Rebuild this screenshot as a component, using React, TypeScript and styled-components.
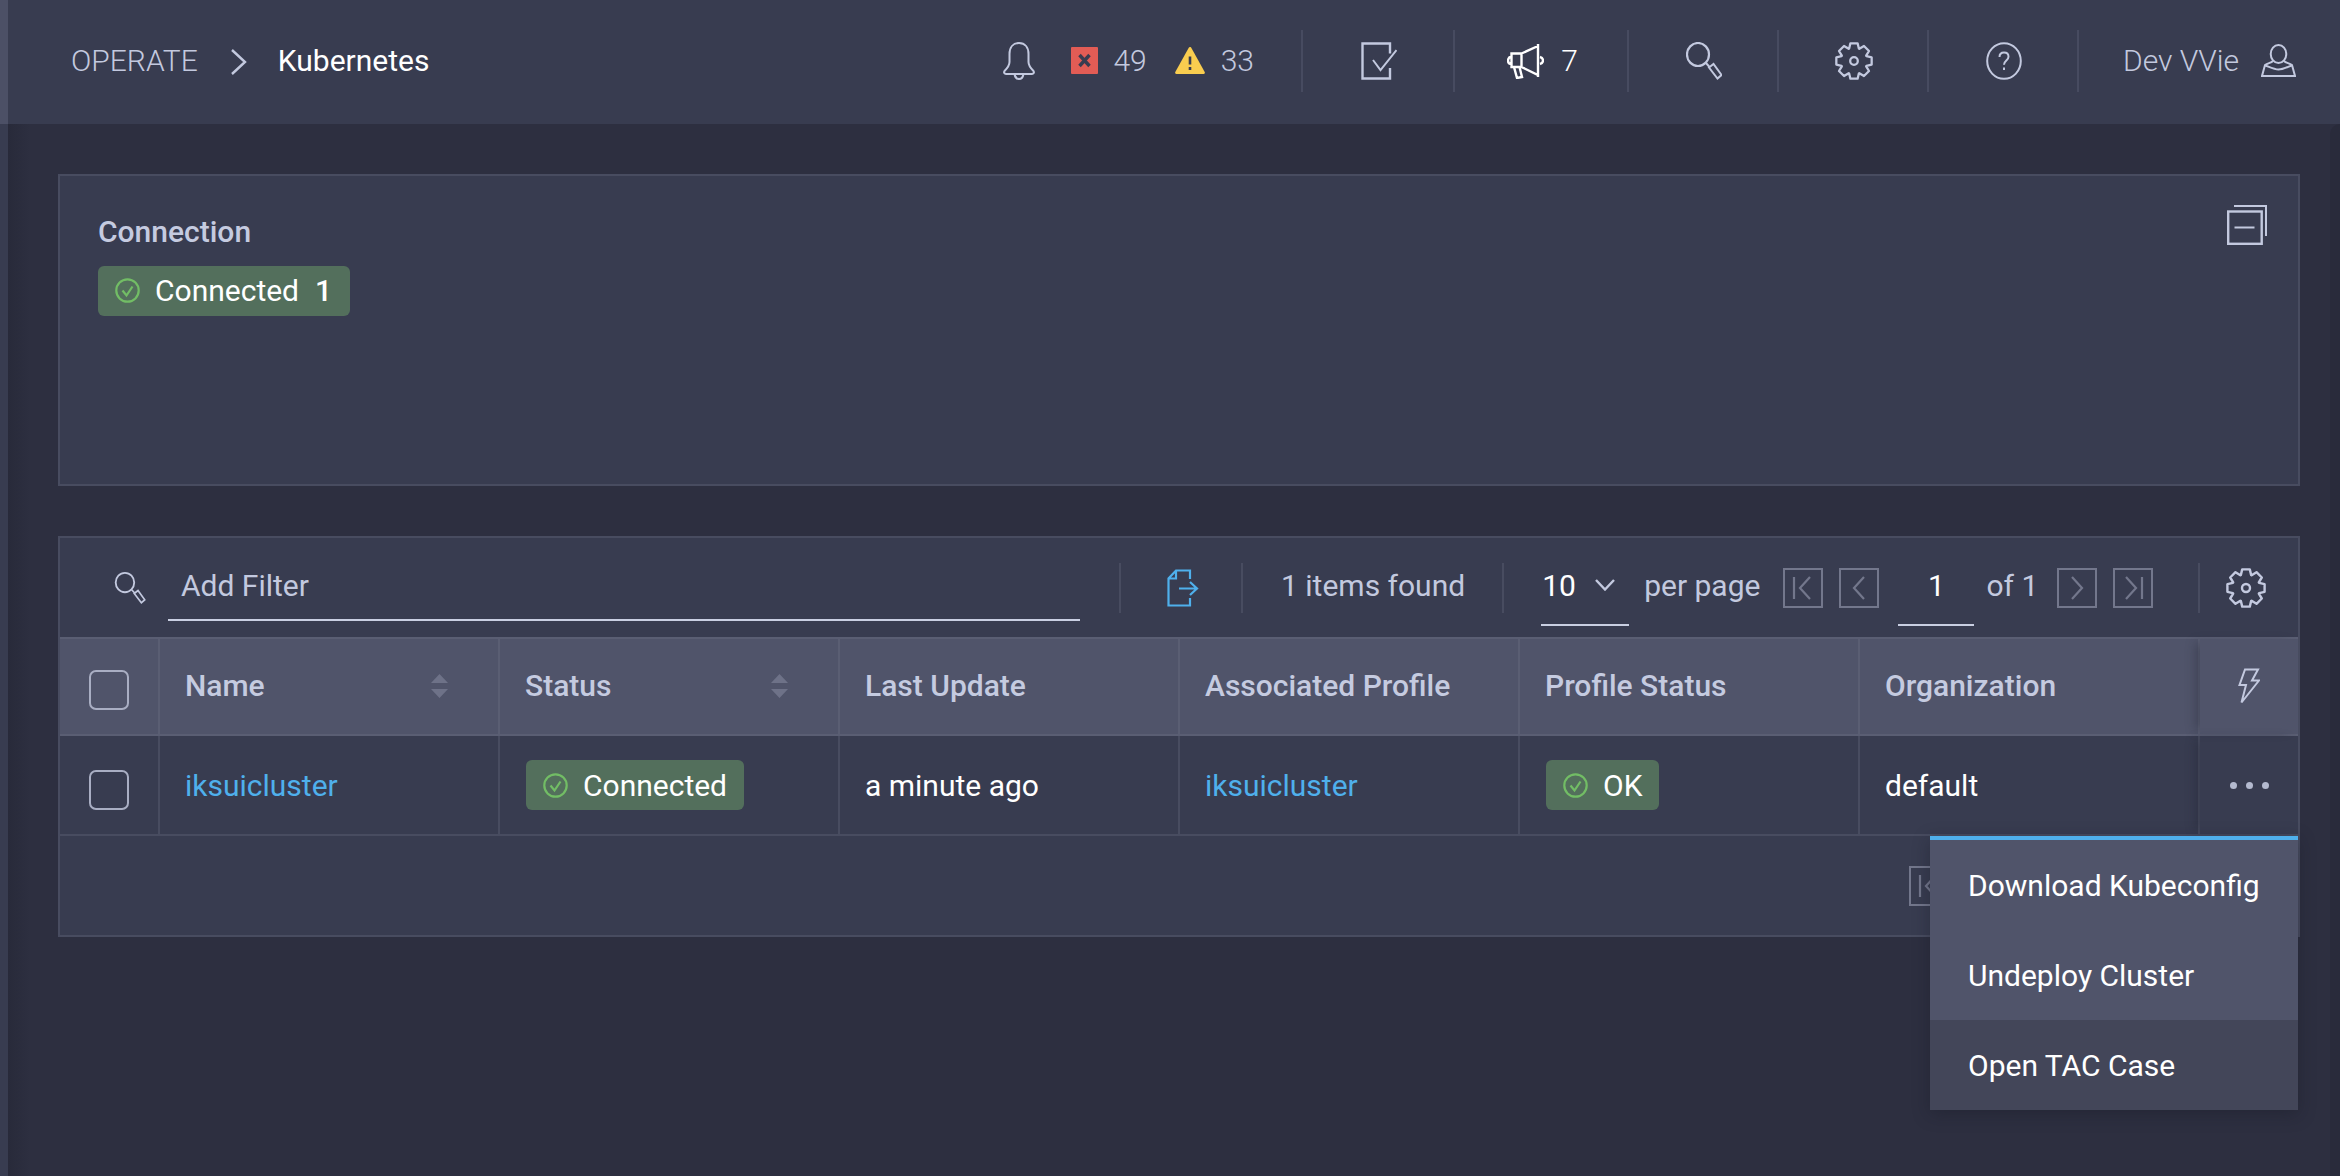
import React from "react";
import styled, { createGlobalStyle } from "styled-components";

const GlobalStyle = createGlobalStyle`
  html, body {
    margin: 0;
    padding: 0;
    background: #2d2f40;
    font-family: Roboto, "Liberation Sans", sans-serif;
    font-size: 30px;
    color: #fff;
  }
  * {
    box-sizing: border-box;
  }
`;

const Page = styled.div`
  width: 2340px;
  height: 1176px;
  overflow: hidden;
  display: flex;
  flex-direction: column;
`;

const TopBar = styled.header`
  position: relative;
  height: 124px;
  flex: none;
  display: flex;
  align-items: center;
  justify-content: space-between;
  background: #383c50;
  padding: 0 0 3px 71px;

  &::before {
    content: "";
    position: absolute;
    left: 0;
    top: 0;
    bottom: 0;
    width: 8px;
    background: #4c5066;
  }
`;

const Breadcrumb = styled.nav`
  display: flex;
  align-items: center;
`;

const Crumb = styled.span<{ $current?: boolean }>`
  color: ${(p) => (p.$current ? "#fff" : "#c3c9df")};
  font-weight: ${(p) => (p.$current ? 400 : 300)};
  line-height: 36px;
`;

const CrumbArrow = styled.svg`
  width: 18px;
  height: 28px;
  margin: 2px 30px 0 32px;
`;

const TopRight = styled.div`
  display: flex;
  align-items: center;
`;

const AlertGroup = styled.div`
  display: flex;
  align-items: center;
  padding-right: 47px;
`;

const Count = styled.span<{ $white?: boolean; $gap: number }>`
  color: ${(p) => (p.$white ? "#fff" : "#c3c9df")};
  font-weight: 300;
  margin-left: ${(p) => p.$gap}px;
  line-height: 36px;
`;

const TopSection = styled.div<{ $width: number }>`
  width: ${(p) => p.$width}px;
  height: 62px;
  padding-left: 3px;
  border-left: 2px solid #474b60;
  display: flex;
  align-items: center;
  justify-content: center;
`;

const UserSection = styled.div`
  height: 62px;
  border-left: 2px solid #474b60;
  display: flex;
  align-items: center;
  padding: 0 44px 0 44px;
`;

const UserName = styled.span`
  color: #c3c9df;
  font-weight: 300;
  margin-right: 22px;
`;

const Main = styled.main`
  position: relative;
  flex: 1;
  display: flex;
  flex-direction: column;
  gap: 50px;
  padding: 50px 40px 0 58px;
  background: #2d2f40;

  &::before {
    content: "";
    position: absolute;
    left: 0;
    top: 0;
    bottom: 0;
    width: 30px;
    background: linear-gradient(90deg, #383c50 0 8px, #282a3a 8px, #2d2f40 30px);
  }

  &::after {
    content: "";
    position: absolute;
    right: 0;
    top: 0;
    bottom: 0;
    width: 10px;
    background: #292b3b;
    border-top-left-radius: 10px;
  }
`;

const SummaryPanel = styled.section`
  position: relative;
  height: 312px;
  display: flex;
  justify-content: space-between;
  align-items: flex-start;
  padding: 29px 31px 0 38px;
  background: #383c50;
  border: 2px solid #484c60;
`;

const SummaryBody = styled.div`
  margin-top: 9px;
`;

const SummaryTitle = styled.div`
  color: #c5cbe0;
  font-weight: 500;
  line-height: 36px;
  margin-bottom: 16px;
`;

const Badge = styled.span<{ $width: number; $lift?: number; $left?: number }>`
  display: flex;
  align-items: center;
  width: ${(p) => p.$width}px;
  height: 50px;
  margin-left: ${(p) => p.$left ?? 0}px;
  padding: 0 0 ${(p) => p.$lift ?? 0}px 17px;
  background: #536f5c;
  border-radius: 6px;
  color: #fff;
`;

const BadgeCount = styled.span`
  font-weight: 500;
  margin-left: 16px;
`;

const GridPanel = styled.section`
  position: relative;
  background: #383c50;
  border: 2px solid #484c60;
`;

const Toolbar = styled.div`
  height: 99px;
  display: flex;
  align-items: center;
`;

const ToolIcon = styled.svg<{ $left: number; $size?: number }>`
  flex: none;
  margin-left: ${(p) => p.$left}px;
  width: ${(p) => p.$size ?? 32}px;
  height: ${(p) => p.$size ?? 32}px;
  overflow: visible;
`;

const FilterBox = styled.div`
  width: 912px;
  height: 66px;
  margin-left: 22px;
  padding: 0 13px 2px;
  display: flex;
  align-items: center;
  border-bottom: 2px solid #c9cfe2;
  color: #c3c9df;
`;

const ToolDivider = styled.div<{ $left: number }>`
  flex: none;
  width: 2px;
  height: 50px;
  margin-left: ${(p) => p.$left}px;
  background: #484c60;
`;

const ToolText = styled.span<{ $left: number }>`
  flex: none;
  margin-left: ${(p) => p.$left}px;
  padding-bottom: 4px;
  color: #c3c9df;
`;

const UnderlinedBox = styled.div<{ $left: number; $width: number; $center?: boolean }>`
  flex: none;
  width: ${(p) => p.$width}px;
  height: 77px;
  margin-left: ${(p) => p.$left}px;
  display: flex;
  align-items: center;
  justify-content: ${(p) => (p.$center ? "center" : "flex-start")};
  padding: 0 0 3px ${(p) => (p.$center ? 0 : 1)}px;
  gap: 19px;
  border-bottom: 2px solid #c9cfe2;
  color: #fff;
`;

const Pager = styled.div<{ $left?: number }>`
  display: flex;
  align-items: center;
  margin-left: ${(p) => p.$left ?? 0}px;
`;

const PagerButton = styled.button<{ $left?: number }>`
  flex: none;
  width: 40px;
  height: 40px;
  padding: 0;
  margin-left: ${(p) => p.$left ?? 0}px;
  background: transparent;
  border: 2px solid #73778c;
  display: flex;
  align-items: center;
  justify-content: center;
`;

const HeaderRow = styled.div`
  display: grid;
  grid-template-columns: 100px repeat(6, 340px) 98px;
  height: 99px;
  background: #50546a;
  border-top: 2px solid #5a5e73;
  border-bottom: 2px solid #5a5e73;
`;

const BodyRow = styled.div`
  display: grid;
  grid-template-columns: 100px repeat(6, 340px) 98px;
  height: 100px;
  border-bottom: 2px solid #484c60;
`;

const HeaderCell = styled.div`
  display: flex;
  align-items: center;
  justify-content: space-between;
  padding: 0 50px 2px 25px;
  border-right: 2px solid #5a5e73;
  color: #c5cbe0;
  font-weight: 500;
`;

const BodyCell = styled.div`
  display: flex;
  align-items: center;
  padding: 0 25px;
  border-right: 2px solid #484c60;
  color: #fff;
`;

const CheckCell = styled.div<{ $head?: boolean }>`
  display: flex;
  align-items: center;
  justify-content: center;
  border-right: 2px solid ${(p) => (p.$head ? "#5a5e73" : "#484c60")};
`;

const Checkbox = styled.span<{ $drop: number }>`
  width: 40px;
  height: 40px;
  margin-top: ${(p) => p.$drop}px;
  border: 2px solid #a9aec3;
  border-radius: 7px;
`;

const ActionCell = styled.div<{ $head?: boolean }>`
  position: relative;
  display: flex;
  align-items: center;
  justify-content: center;
  box-shadow: -8px 0 10px -4px rgba(30, 32, 46, 0.35);
  ${(p) => (p.$head ? "padding-bottom: 2px;" : "")}
`;

const Dots = styled.div`
  display: flex;
  gap: 9px;
`;

const Dot = styled.span`
  width: 7px;
  height: 7px;
  border-radius: 50%;
  background: #b4bacf;
`;

const LinkText = styled.a`
  color: #4fb0ec;
`;

const GridFooter = styled.div`
  height: 99px;
  display: flex;
  align-items: center;
  justify-content: flex-end;
  padding-right: 19px;
`;

const PagerPageGap = styled.div`
  width: 178px;
`;

const Menu = styled.div`
  position: absolute;
  top: 298px;
  right: 0;
  width: 368px;
  border-top: 4px solid #4fb0ec;
  box-shadow: 0 4px 16px rgba(20, 22, 34, 0.35);
  z-index: 2;
`;

const MenuItem = styled.div<{ $active?: boolean }>`
  height: 90px;
  padding-left: 38px;
  display: flex;
  align-items: center;
  background: ${(p) => (p.$active ? "#50546a" : "#434659")};
  color: #fff;
`;

const columnTitles = [
  { title: "Name", sort: true },
  { title: "Status", sort: true },
  { title: "Last Update" },
  { title: "Associated Profile" },
  { title: "Profile Status" },
  { title: "Organization" },
];

const LINE = "#c3c9df";

// outline of the eight tooth cog used in the top bar and the toolbar
const gearPath = (() => {
  const pts: string[] = [];
  const cx = 20;
  const cy = 20;
  for (let i = 0; i < 8; i++) {
    const a = (i * Math.PI) / 4 - Math.PI / 2;
    const corners: [number, number][] = [
      [a - 0.37, 14],
      [a - 0.2, 19],
      [a + 0.2, 19],
      [a + 0.37, 14],
    ];
    corners.forEach(([ang, r]) => {
      pts.push(`${(cx + r * Math.cos(ang)).toFixed(1)} ${(cy + r * Math.sin(ang)).toFixed(1)}`);
    });
  }
  return `M${pts.join("L")}Z`;
})();

const GearIcon = () => (
  <>
    <path d={gearPath} fill="none" stroke={LINE} strokeWidth="2.400" strokeLinejoin="round" />
    <circle cx="20" cy="20" r="4" fill="none" stroke={LINE} strokeWidth="2.400" />
  </>
);

const SearchShape = () => (
  <>
    <ellipse cx="12" cy="12.500" rx="11" ry="11.500" fill="none" stroke={LINE} strokeWidth="2.200" />
    <path d="M23 25.500L27.500 22l8 11-4 3.500zM20 21l3.500 4" fill="none" stroke={LINE} strokeWidth="2" />
  </>
);

const CheckCircle = () => (
  <svg width="25" height="25" viewBox="0 0 25 25" style={{ flex: "none", marginRight: 15 }}>
    <circle cx="12.500" cy="12.500" r="11.200" fill="none" stroke="#72bd65" strokeWidth="2.200" />
    <path d="M7.500 12.500l4 5 6-9" fill="none" stroke="#72bd65" strokeWidth="2.200" />
  </svg>
);

const SortArrows = () => (
  <svg width="17" height="24" viewBox="0 0 17 24">
    <path d="M8.500 0L17 9H0zM0 15h17l-8.500 9z" fill="#6e7288" />
  </svg>
);

const PagerIcon = ({ d }: { d: string }) => (
  <svg width="28" height="28" viewBox="0 0 28 28">
    <path d={d} fill="none" stroke="#73778c" strokeWidth="2.200" />
  </svg>
);

const PagerFirst = ({ left }: { left?: number }) => (
  <PagerButton $left={left}>
    <PagerIcon d="M5 3v22M21 3L11 14l10 11" />
  </PagerButton>
);
const PagerPrev = ({ left }: { left?: number }) => (
  <PagerButton $left={left}>
    <PagerIcon d="M19 3L9 14l10 11" />
  </PagerButton>
);
const PagerNext = ({ left }: { left?: number }) => (
  <PagerButton $left={left}>
    <PagerIcon d="M9 3l10 11L9 25" />
  </PagerButton>
);
const PagerLast = ({ left }: { left?: number }) => (
  <PagerButton $left={left}>
    <PagerIcon d="M23 3v22M7 3l10 11L7 25" />
  </PagerButton>
);

const App = () => {
  return (
    <Page>
      <GlobalStyle />
      <TopBar>
        <Breadcrumb>
          <Crumb>OPERATE</Crumb>
          <CrumbArrow viewBox="0 0 18 28">
            <path d="M2 2l13 12L2 26" fill="none" stroke="#c3c9df" strokeWidth="2.400" />
          </CrumbArrow>
          <Crumb $current>Kubernetes</Crumb>
        </Breadcrumb>
        <TopRight>
          <AlertGroup>
            <svg width="32" height="38" viewBox="0 0 32 38">
              <path
                d="M16 1c-6 0-9.500 4.500-9.500 11v8c0 4-2 6-5 9-1 1.500 0 3 1.500 3h26c1.500 0 2.500-1.500 1.500-3-3-3-5-5-5-9v-8C25.500 5.500 22 1 16 1zM11.500 32c.5 3 2 5 4.500 5s4-2 4.500-5"
                fill="none"
                stroke={LINE}
                strokeWidth="2"
              />
            </svg>
            <svg width="27" height="27" viewBox="0 0 27 27" style={{ marginLeft: 36 }}>
              <rect width="27" height="27" rx="1" fill="#e25c55" />
              <path d="M8.500 8l10 11M18.500 8l-10 11" stroke="#383c50" strokeWidth="3.400" />
            </svg>
            <Count $gap={15}>49</Count>
            <svg width="30" height="27" viewBox="0 0 30 27" style={{ marginLeft: 28 }}>
              <path d="M15 0c.7 0 1 .3 1.400 1L29.700 25c.5 1 0 2-1 2H1.300c-1 0-1.500-1-1-2L13.600 1c.4-.7.7-1 1.400-1z" fill="#f9cd4f" />
              <path d="M15 9.500v8M15 20v3" stroke="#383c50" strokeWidth="2.600" />
            </svg>
            <Count $gap={16}>33</Count>
          </AlertGroup>
          <TopSection $width={152}>
            <svg width="36" height="38" viewBox="0 0 36 38">
              <path d="M29 11.500V1.500H1.500v35H29V26" fill="none" stroke={LINE} strokeWidth="2.400" />
              <path d="M12 18l7.500 10L35.500 8" fill="none" stroke={LINE} strokeWidth="2" />
            </svg>
          </TopSection>
          <TopSection $width={174}>
            <svg width="37" height="37" viewBox="0 0 37 37">
              <path
                d="M4.500 11.500h10V25h-10zM14.500 11.500L31 4v29l-16.500-8M31 2v33M4.500 14.500C2.500 15 1 16.500 1 18.500s1.500 3.500 3.500 3.500M33 15c2 .5 3 2 3 3.500s-1 3-3 3.500M7 25l3 11 5-1-2.500-10"
                fill="none"
                stroke="#fff"
                strokeWidth="2.400"
              />
            </svg>
            <Count $white $gap={17}>7</Count>
          </TopSection>
          <TopSection $width={150}>
            <svg width="36" height="38" viewBox="0 0 36 38">
              <SearchShape />
            </svg>
          </TopSection>
          <TopSection $width={150}>
            <svg width="38" height="38" viewBox="0 0 40 40">
              <GearIcon />
            </svg>
          </TopSection>
          <TopSection $width={150}>
            <svg width="36" height="38" viewBox="0 0 36 38">
              <ellipse cx="18" cy="19" rx="16.800" ry="17.800" fill="none" stroke={LINE} strokeWidth="2" />
              <path d="M13.500 15c0-3 2-4.500 4.500-4.500s4.500 1.500 4.500 4.200c0 3.800-4.500 3.800-4.500 8" fill="none" stroke={LINE} strokeWidth="2" />
              <path d="M18 25.500v2.500" stroke={LINE} strokeWidth="2" />
            </svg>
          </TopSection>
          <UserSection>
            <UserName>Dev VVie</UserName>
            <svg width="35" height="33" viewBox="0 0 35 33">
              <ellipse cx="17.500" cy="10" rx="7.800" ry="9" fill="none" stroke={LINE} strokeWidth="2" />
              <path d="M12 17c-2 2-5 2-8 4l-3 11h33l-3-11c-3-2-6-2-8-4M4.500 21.500c4 1.500 9 4 13 4s9-2.500 13-4" fill="none" stroke={LINE} strokeWidth="2" />
            </svg>
          </UserSection>
        </TopRight>
      </TopBar>

      <Main>
        <SummaryPanel>
          <SummaryBody>
            <SummaryTitle>Connection</SummaryTitle>
            <Badge $width={252} $lift={2}>
              <CheckCircle />
              Connected
              <BadgeCount>1</BadgeCount>
            </Badge>
          </SummaryBody>
          <svg width="40" height="40" viewBox="0 0 40 40">
            <path d="M7 1h32v30" fill="none" stroke={LINE} strokeWidth="2" />
            <rect x="1.200" y="6.500" width="33.500" height="32.300" fill="none" stroke={LINE} strokeWidth="2.400" />
            <path d="M7.500 22.500h20" stroke={LINE} strokeWidth="2" />
          </svg>
        </SummaryPanel>

        <GridPanel>
          <Toolbar>
            <ToolIcon $left={54} viewBox="0 0 36 38">
              <SearchShape />
            </ToolIcon>
            <FilterBox>Add Filter</FilterBox>
            <ToolDivider $left={39} />
            <ToolIcon $left={46} viewBox="0 0 32 38" style={{ height: 38 }}>
              <path
                d="M23 10V1.500H9L1.500 9.500v27H23V29M9 1.500v8H1.500M12 19.500h17.500M23 13l7 6.500-7 6.500"
                fill="none"
                stroke="#4fb0ec"
                strokeWidth="2.200"
              />
            </ToolIcon>
            <ToolDivider $left={42} />
            <ToolText $left={38}>1 items found</ToolText>
            <ToolDivider $left={37} />
            <UnderlinedBox $left={37} $width={88}>
              10
              <svg width="20" height="12" viewBox="0 0 20 12">
                <path d="M1 1l9 9.500L19 1" fill="none" stroke={LINE} strokeWidth="2.400" />
              </svg>
            </UnderlinedBox>
            <ToolText $left={15}>per page</ToolText>
            <Pager $left={23}>
              <PagerFirst />
              <PagerPrev left={16} />
              <UnderlinedBox $left={19} $width={76} $center>1</UnderlinedBox>
              <ToolText $left={12}>of 1</ToolText>
              <PagerNext left={19} />
              <PagerLast left={16} />
            </Pager>
            <ToolDivider $left={45} />
            <ToolIcon $left={26} $size={40} viewBox="0 0 40 40">
              <GearIcon />
            </ToolIcon>
          </Toolbar>

          <HeaderRow>
            <CheckCell $head>
              <Checkbox $drop={6} />
            </CheckCell>
            {columnTitles.map((col) => (
              <HeaderCell key={col.title}>
                {col.title}
                {col.sort && <SortArrows />}
              </HeaderCell>
            ))}
            <ActionCell $head>
              <svg width="22" height="36" viewBox="0 0 22 36">
                <path d="M7 1.500h13l-6 11h7L3.500 34.500 8 17H1.500z" fill="none" stroke={LINE} strokeWidth="2" />
              </svg>
            </ActionCell>
          </HeaderRow>

          <BodyRow>
            <CheckCell>
              <Checkbox $drop={10} />
            </CheckCell>
            <BodyCell>
              <LinkText>iksuicluster</LinkText>
            </BodyCell>
            <BodyCell>
              <Badge $width={218} $left={1}>
                <CheckCircle />
                Connected
              </Badge>
            </BodyCell>
            <BodyCell>a minute ago</BodyCell>
            <BodyCell>
              <LinkText>iksuicluster</LinkText>
            </BodyCell>
            <BodyCell>
              <Badge $width={113} $left={1}>
                <CheckCircle />
                OK
              </Badge>
            </BodyCell>
            <BodyCell>default</BodyCell>
            <ActionCell>
              <Dots>
                <Dot />
                <Dot />
                <Dot />
              </Dots>
            </ActionCell>
          </BodyRow>

          <GridFooter>
            <Pager>
              <PagerFirst />
              <PagerPrev left={16} />
              <PagerPageGap />
              <PagerNext />
              <PagerLast left={16} />
            </Pager>
          </GridFooter>

          <Menu>
            <MenuItem $active>Download Kubeconfig</MenuItem>
            <MenuItem $active>Undeploy Cluster</MenuItem>
            <MenuItem>Open TAC Case</MenuItem>
          </Menu>
        </GridPanel>
      </Main>
    </Page>
  );
};

export default App;
